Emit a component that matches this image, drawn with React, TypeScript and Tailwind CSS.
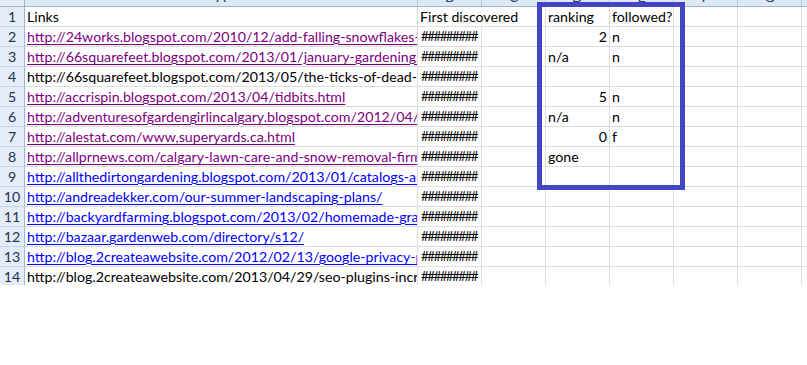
import React from "react";

const rows: { a: string; ac: "p" | "b" | "k"; b: string; d?: string; dr?: boolean; e?: string }[] = [
  { a: "Links", ac: "k", b: "First discovered", d: "ranking", e: "followed?" },
  { a: "http://24works.blogspot.com/2010/12/add-falling-snowflakes-to-blogger.html", ac: "p", b: "#########", d: "2", dr: true, e: "n" },
  { a: "http://66squarefeet.blogspot.com/2013/01/january-gardening.html", ac: "p", b: "#########", d: "n/a", e: "n" },
  { a: "http://66squarefeet.blogspot.com/2013/05/the-ticks-of-dead-horse.html", ac: "k", b: "#########" },
  { a: "http://accrispin.blogspot.com/2013/04/tidbits.html", ac: "p", b: "#########", d: "5", dr: true, e: "n" },
  { a: "http://adventuresofgardengirlincalgary.blogspot.com/2012/04/spring.html", ac: "p", b: "#########", d: "n/a", e: "n" },
  { a: "http://alestat.com/www,superyards.ca.html", ac: "p", b: "#########", d: "0", dr: true, e: "f" },
  { a: "http://allprnews.com/calgary-lawn-care-and-snow-removal-firm.html", ac: "p", b: "#########", d: "gone" },
  { a: "http://allthedirtongardening.blogspot.com/2013/01/catalogs-and-more.html", ac: "b", b: "#########" },
  { a: "http://andreadekker.com/our-summer-landscaping-plans/", ac: "b", b: "#########" },
  { a: "http://backyardfarming.blogspot.com/2013/02/homemade-granola.html", ac: "b", b: "#########" },
  { a: "http://bazaar.gardenweb.com/directory/s12/", ac: "b", b: "#########" },
  { a: "http://blog.2createawebsite.com/2012/02/13/google-privacy-policy/", ac: "b", b: "#########" },
  { a: "http://blog.2createawebsite.com/2013/04/29/seo-plugins-increase/", ac: "k", b: "#########" },
];

const colorCls = {
  p: "text-[#800080] underline decoration-1 underline-offset-[2px]",
  b: "text-[#0000ff] underline decoration-1 underline-offset-[2px]",
  k: "text-black",
};

const letters = ["A", "B", "C", "D", "E", "F", "G", "H"];
const widths = ["w-[393px]", "w-[64px]", "w-[64px]", "w-[64px]", "w-[64px]", "w-[64px]", "w-[64px]", "w-[64px]"];

export default function App() {
  return (
    <div className="relative w-[807px] h-[365px] bg-white overflow-hidden" style={{ fontFamily: "Lato, 'Liberation Sans', sans-serif" }}>
      <div className="h-[285px] overflow-hidden">
        <div className="flex h-[7px] border-b border-[#9eb6ce] bg-[#dde8f5]">
          <div className="w-[25px] shrink-0 border-r border-[#9eb6ce] bg-[#e4ecf7]" />
          {letters.map((l, i) => (
            <div key={l} className={`${widths[i]} shrink-0 border-r border-[#b4c8dd] overflow-hidden h-[6px]`}>
              <div className="h-[20px] -mt-[13px] leading-[20px] text-center text-[14.2px] text-[#27415f]">{l}</div>
            </div>
          ))}
        </div>
        {rows.map((r, i) => (
          <div key={i} className="flex h-[20px] text-[14.2px] leading-[19px]">
            <div className="w-[25px] shrink-0 border-r border-b border-r-[#9eb6ce] border-b-[#c5d5e8] bg-[#e4ecf7] text-center text-[#1f3450]">
              {i + 1}
            </div>
            <div className="w-[393px] shrink-0 border-r border-b border-[#dadcdd] overflow-hidden whitespace-nowrap pl-[2px]">
              <span className={colorCls[r.ac]}>{r.a}</span>
            </div>
            {i === 0 ? (
              <div className="w-[64px] shrink-0 border-b border-r border-[#dadcdd] border-r-transparent whitespace-nowrap pl-[2px] relative z-10">
                {r.b}
              </div>
            ) : (
              <div className="w-[64px] shrink-0 border-b border-r border-[#dadcdd] whitespace-nowrap overflow-hidden pl-[3px] text-[13.4px] tracking-[-1.55px]">
                {r.b}
              </div>
            )}
            <div className="w-[64px] shrink-0 border-r border-b border-[#dadcdd]" />
            <div className={`w-[64px] shrink-0 border-r border-b border-[#dadcdd] whitespace-nowrap px-[2px] ${r.dr ? "text-right" : "text-left"}`}>
              {r.d}
            </div>
            <div className="w-[64px] shrink-0 border-r border-b border-[#dadcdd] whitespace-nowrap px-[2px]">{r.e}</div>
            <div className="w-[64px] shrink-0 border-r border-b border-[#dadcdd]" />
            <div className="w-[64px] shrink-0 border-r border-b border-[#dadcdd]" />
            <div className="w-[64px] shrink-0 border-r border-b border-[#dadcdd]" />
          </div>
        ))}
      </div>
      <div className="absolute left-[537px] top-[2px] w-[148px] h-[188px] border-[5px] border-[#4444c6]" />
    </div>
  );
}
